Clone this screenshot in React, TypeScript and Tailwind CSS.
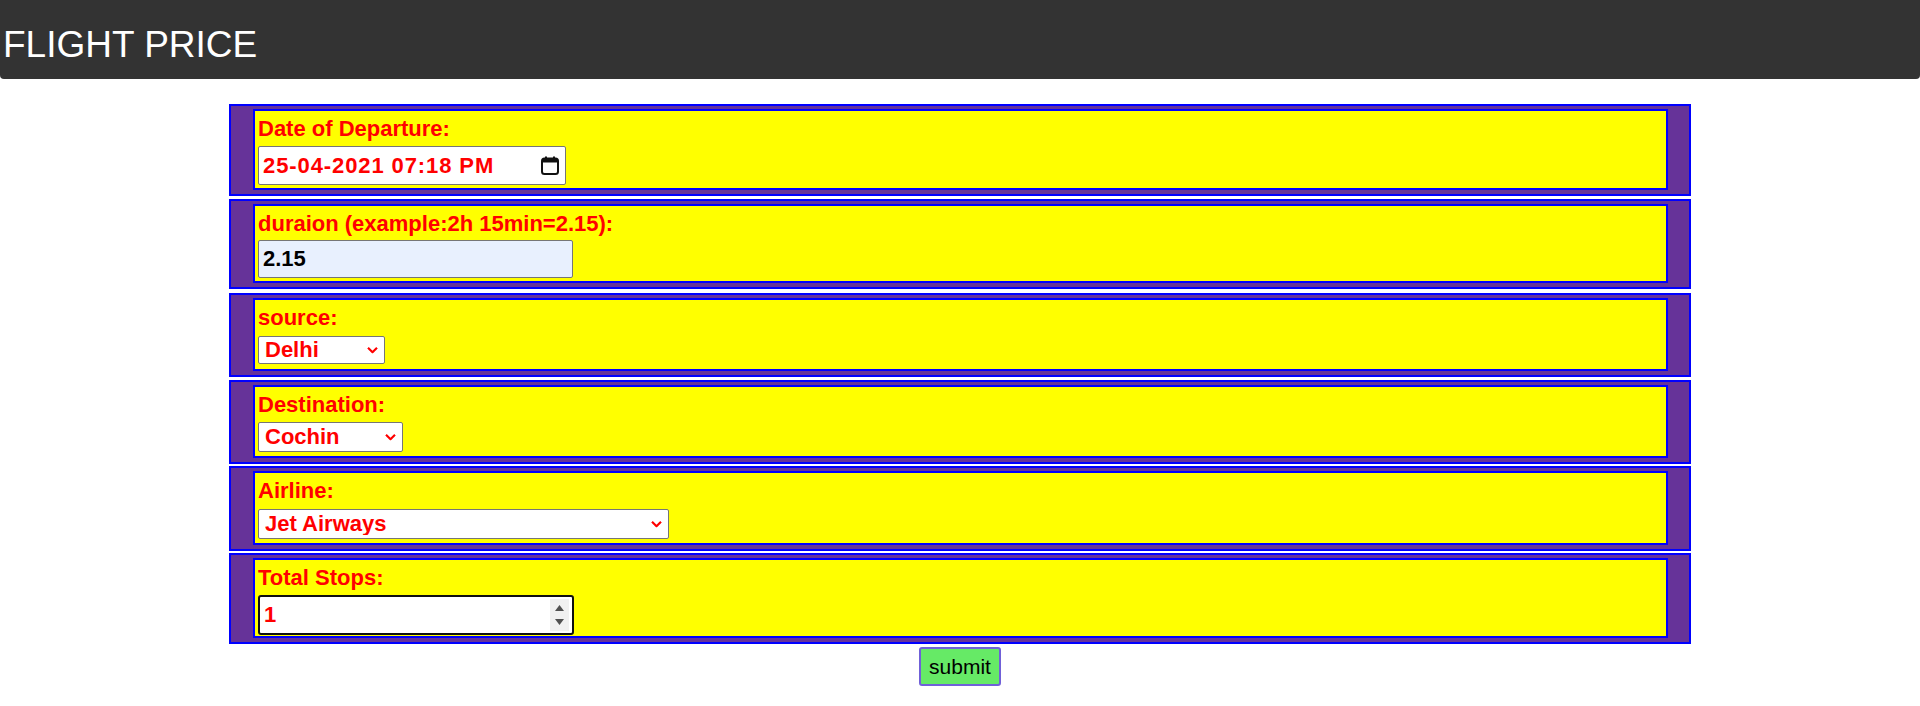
import type { ReactNode } from 'react';

const Chevron = () => (
  <svg
    width="11"
    height="7"
    viewBox="0 0 11 7"
    className="pointer-events-none absolute right-[7px] top-1/2 -translate-y-1/2"
  >
    <path d="M1 1.2l4.5 4.5 4.5-4.5" fill="none" stroke="#ff0000" strokeWidth="2.2" />
  </svg>
);

const Row = ({
  label,
  labelClass,
  padClass,
  children,
}: {
  label: string;
  labelClass: string;
  padClass: string;
  children: ReactNode;
}) => (
  <div className="border-2 border-[#0000ff] bg-[#663399] pt-[3px] pb-[4px] pl-[22px] pr-[21px]">
    <div className={`border-2 border-[#0000ff] bg-[#ffff00] px-[3px] ${padClass}`}>
      <div className={`pt-[5px] text-[22px] leading-[25px] font-bold text-[#ff0000] ${labelClass}`}>
        {label}
      </div>
      {children}
    </div>
  </div>
);

const App = () => {
  return (
    <div className="min-h-[706px] bg-white font-['Liberation_Sans',Arial,sans-serif]">
      {/* header bar */}
      <div className="h-[79px] rounded-b-[4px] bg-[#333333] pl-[3px] pt-[26px] text-[37px] leading-none text-white">
        FLIGHT PRICE
      </div>

      <form className="mx-auto mt-[25px] flex w-[1462px] flex-col">
        <Row label="Date of Departure:" labelClass="h-[35px]" padClass="pb-[3px]">
          <div className="relative w-[308px]">
            <input
              type="text"
              readOnly
              value="25-04-2021 07:18 PM"
              className="h-[39px] w-full rounded-[2px] border border-[#767676] bg-white pl-[4px] text-[22px] font-bold tracking-[0.9px] text-[#ff0000] outline-none"
            />
            <svg
              width="18"
              height="19"
              viewBox="0 0 18 19"
              className="pointer-events-none absolute right-[7px] top-[10px]"
            >
              <rect x="1" y="2.5" width="16" height="15.5" rx="2.5" fill="none" stroke="#111" strokeWidth="2" />
              <rect x="1" y="2.5" width="16" height="4" rx="1.5" fill="#111" />
              <rect x="4" y="0.5" width="2" height="3" fill="#111" />
              <rect x="12" y="0.5" width="2" height="3" fill="#111" />
            </svg>
          </div>
        </Row>

        <div className="mt-[3px]">
          <Row label="duraion (example:2h 15min=2.15):" labelClass="h-[34px]" padClass="pb-[3px]">
            <input
              type="text"
              defaultValue="2.15"
              className="h-[38px] w-[315px] rounded-[2px] border border-[#767676] bg-[#e8f0fe] pl-[4px] text-[22px] font-bold text-black outline-none"
            />
          </Row>
        </div>

        <div className="mt-[4px]">
          <Row label="source:" labelClass="h-[36px]" padClass="pb-[5px]">
            <div className="relative w-[127px]">
              <select
                defaultValue="Delhi"
                className="h-[28px] w-full appearance-none rounded-[2px] border border-[#767676] bg-white pl-[6px] text-[22px] leading-none font-bold text-[#ff0000] outline-none"
              >
                <option>Delhi</option>
                <option>Kolkata</option>
                <option>Banglore</option>
                <option>Mumbai</option>
                <option>Chennai</option>
              </select>
              <Chevron />
            </div>
          </Row>
        </div>

        <div className="mt-[3px]">
          <Row label="Destination:" labelClass="h-[35px]" padClass="pb-[4px]">
            <div className="relative w-[145px]">
              <select
                defaultValue="Cochin"
                className="h-[30px] w-full appearance-none rounded-[2px] border border-[#767676] bg-white pl-[6px] text-[22px] leading-none font-bold text-[#ff0000] outline-none"
              >
                <option>Cochin</option>
                <option>Banglore</option>
                <option>Delhi</option>
                <option>New Delhi</option>
                <option>Hyderabad</option>
                <option>Kolkata</option>
              </select>
              <Chevron />
            </div>
          </Row>
        </div>

        <div className="mt-[2px]">
          <Row label="Airline:" labelClass="h-[36px]" padClass="pb-[4px]">
            <div className="relative w-[411px]">
              <select
                defaultValue="Jet Airways"
                className="h-[30px] w-full appearance-none rounded-[2px] border border-[#767676] bg-white pl-[6px] text-[22px] leading-none font-bold text-[#ff0000] outline-none"
              >
                <option>Jet Airways</option>
                <option>IndiGo</option>
                <option>Air India</option>
                <option>SpiceJet</option>
                <option>Vistara</option>
                <option>GoAir</option>
              </select>
              <Chevron />
            </div>
          </Row>
        </div>

        <div className="mt-[2px]">
          <Row label="Total Stops:" labelClass="h-[35px]" padClass="pb-[1px]">
            <div className="relative w-[316px]">
              <input
                type="text"
                defaultValue="1"
                className="h-[40px] w-full rounded-[3px] border-2 border-[#101010] bg-white pl-[4px] text-[22px] font-bold text-[#ff0000] outline-none"
              />
              {/* spinner */}
              <div className="pointer-events-none absolute right-[5px] top-[4px] flex h-[32px] w-[19px] flex-col items-center justify-between bg-[#f0f0f0] py-[6px]">
                <svg width="9" height="6" viewBox="0 0 9 6">
                  <path d="M4.5 0L9 6H0z" fill="#505050" />
                </svg>
                <svg width="9" height="6" viewBox="0 0 9 6">
                  <path d="M0 0h9L4.5 6z" fill="#505050" />
                </svg>
              </div>
            </div>
          </Row>
        </div>

        <div className="mt-[3px] flex justify-center">
          <button
            type="button"
            className="h-[39px] w-[82px] rounded-[3px] border-2 border-[#7060d8] bg-[#66ea66] text-[21px] text-black"
          >
            submit
          </button>
        </div>
      </form>
    </div>
  );
};

export default App;
